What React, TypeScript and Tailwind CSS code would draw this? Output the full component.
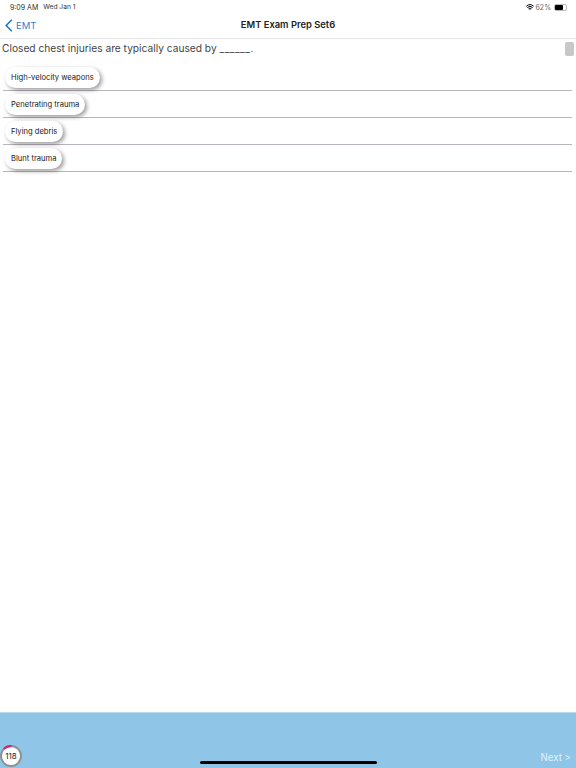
import React from 'react';
import { Wifi } from 'lucide-react';

const options = [
  { label: 'High-velocity weapons' },
  { label: 'Penetrating trauma' },
  { label: 'Flying debris' },
  { label: 'Blunt trauma' },
];

const StatusBar = () => (
  <div className="flex h-[14px] items-center justify-between pl-[10px] pr-[9px] text-[7px] leading-none text-[#333]">
    <div className="flex gap-[5px]">
      <span>9:09 AM</span>
      <span className="text-[6.7px]">Wed Jan 1</span>
    </div>
    <div className="flex items-center gap-[2px]">
      <Wifi className="h-[8px] w-[8px] text-black" strokeWidth={3} />
      <span className="text-[#666]">62%</span>
      <div className="ml-[1px] flex h-[7px] w-[13px] items-center rounded-[2px] border border-[#bbb] p-0">
        <div className="h-full w-[8px] rounded-[1px] bg-black" />
      </div>
    </div>
  </div>
);

const NavBar = () => (
  <div className="relative flex h-[25px] items-center justify-center border-b border-[#e4e4e4] pb-[2px]">
    <div className="absolute left-[5px] top-[5px] flex items-center gap-[3px] text-[9.5px] leading-none text-[#2f80d0]">
      <svg viewBox="0 0 8 13" className="h-[13px] w-[8px]" fill="none" stroke="#1f78d1" strokeWidth="1.6">
        <path d="M6.8 0.8 1.2 6.5l5.6 5.7" />
      </svg>
      <span>EMT</span>
    </div>
    <span className="text-[9.4px] font-semibold leading-none text-[#222]">EMT Exam Prep Set6</span>
  </div>
);

const Option = ({ label }: { label: string }) => (
  <div className="flex h-[27px] items-center border-b border-[#b9b3bb] pl-[2px]">
    <div className="flex h-[21px] items-center rounded-full bg-white px-[6px] pt-[1px] text-[7.6px] text-[#222] shadow-[2px_2px_4px_rgba(0,0,0,0.4)]">
      {label}
    </div>
  </div>
);

const Timer = () => (
  <div className="relative flex h-[22px] w-[22px] items-center justify-center">
    <svg viewBox="0 0 22 22" className="absolute inset-0 h-full w-full">
      <circle cx="11" cy="11" r="10" fill="#fff" stroke="#8f8f93" strokeWidth="1.8" />
      <path d="M3.9 3.9A10 10 0 0 1 11.5 1" fill="none" stroke="#d81e6c" strokeWidth="1.8" />
    </svg>
    <span className="relative text-[8px] leading-none text-[#222]">118</span>
  </div>
);

export default function App() {
  return (
    <div className="flex h-[768px] w-[576px] flex-col overflow-hidden bg-white font-['Inter','Liberation_Sans',sans-serif]">
      <StatusBar />
      <NavBar />
      <div className="relative flex-1">
        <div className="absolute right-[2px] top-[3px] h-[14px] w-[9px] rounded-[2px] bg-[#c8c8ca] blur-[0.5px]" />
        <p className="pl-[2px] pt-[2px] text-[10.2px] leading-[14px] text-[#444]">
          Closed chest injuries are typically caused by <span className="tracking-[0.5px]">______</span>.
        </p>
        <div className="ml-[3px] mr-[4px] mt-[9px] flex flex-col">
          {options.map((o) => (
            <Option key={o.label} label={o.label} />
          ))}
        </div>
      </div>
      <div className="relative flex h-[56px] items-end justify-between border-t border-[#b7dcec] bg-[#8fc6e8] pb-[1px] pl-0 pr-[5px]">
        <Timer />
        <span className="pb-[4px] text-[9.7px] leading-none text-[#e0f0fa]">Next &gt;</span>
        <div className="absolute bottom-[4px] left-[200px] h-[3px] w-[177px] rounded-full bg-black" />
      </div>
    </div>
  );
}
